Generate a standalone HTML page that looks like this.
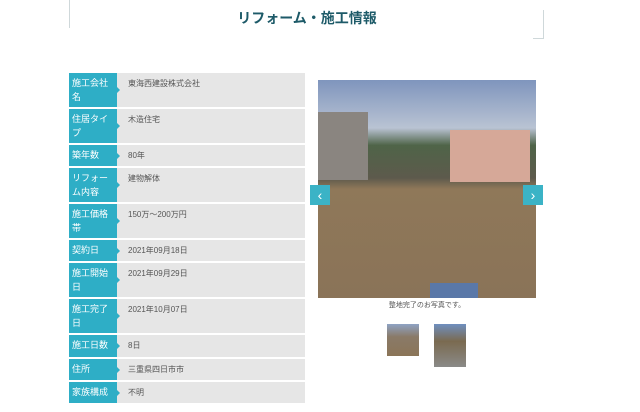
<!DOCTYPE html>
<html><head><meta charset="utf-8"><style>
body{margin:0;width:640px;height:412px;background:#fff;font-family:"Liberation Sans","Noto Sans CJK JP",sans-serif;position:relative;overflow:hidden}
.t{position:absolute;left:0;width:614px;top:8px;text-align:center;font-size:14px;font-weight:bold;color:#1d5a68}
.row{position:absolute;left:69px;width:236px;background:#e6e6e6;font-size:8px;color:#555}
.lab{position:absolute;left:0;top:0;bottom:0;width:48px;background:#2eaec6;color:#fff;font-size:9px;line-height:14px;padding:3px 3px;box-sizing:border-box}
.lab:after{content:"";position:absolute;right:-3px;top:50%;margin-top:-3px;border-left:3px solid #2eaec6;border-top:3px solid transparent;border-bottom:3px solid transparent}
.val{position:absolute;left:59px;top:5px}
.photo{position:absolute;left:318px;top:80px;width:218px;height:218px;background:linear-gradient(#7f95bd 0%,#b9c3d3 22%,#4f6448 30%,#5d5a4c 45%,#8f7859 50%,#8a7358 100%)}
.arr{position:absolute;top:185px;width:20px;height:20px;background:#3bb3c6;color:#fff;font-size:14px;text-align:center;line-height:20px}
</style></head><body>
<div style="position:absolute;left:69px;top:0;width:1px;height:28px;background:#cfd8da"></div>
<div style="position:absolute;left:543px;top:10px;width:1px;height:29px;background:#cfd8da"></div>
<div style="position:absolute;left:533px;top:38px;width:11px;height:1px;background:#cfd8da"></div>
<div class="t">リフォーム・施工情報</div>

<div class="row" style="top:73px;height:34px"><div class="lab">施工会社名</div><div class="val">東海西建設株式会社</div></div>
<div class="row" style="top:109px;height:34px"><div class="lab">住居タイプ</div><div class="val">木造住宅</div></div>
<div class="row" style="top:145px;height:21px"><div class="lab">築年数</div><div class="val">80年</div></div>
<div class="row" style="top:168px;height:34px"><div class="lab">リフォーム内容</div><div class="val">建物解体</div></div>
<div class="row" style="top:204px;height:34px"><div class="lab">施工価格帯</div><div class="val">150万～200万円</div></div>
<div class="row" style="top:240px;height:21px"><div class="lab">契約日</div><div class="val">2021年09月18日</div></div>
<div class="row" style="top:263px;height:34px"><div class="lab">施工開始日</div><div class="val">2021年09月29日</div></div>
<div class="row" style="top:299px;height:34px"><div class="lab">施工完了日</div><div class="val">2021年10月07日</div></div>
<div class="row" style="top:335px;height:22px"><div class="lab">施工日数</div><div class="val">8日</div></div>
<div class="row" style="top:359px;height:21px"><div class="lab">住所</div><div class="val">三重県四日市市</div></div>
<div class="row" style="top:382px;height:21px"><div class="lab">家族構成</div><div class="val">不明</div></div>

<div class="photo"></div>
<div style="position:absolute;left:318px;top:112px;width:50px;height:68px;background:#8a8580"></div>
<div style="position:absolute;left:450px;top:130px;width:80px;height:52px;background:#d6a898"></div>
<div style="position:absolute;left:430px;top:283px;width:48px;height:15px;background:#5a78a8"></div>
<div class="arr" style="left:310px">&#8249;</div>
<div class="arr" style="left:523px">&#8250;</div>
<div style="position:absolute;left:318px;width:218px;top:300px;text-align:center;font-size:7px;color:#555">整地完了のお写真です。</div>
<div style="position:absolute;left:387px;top:324px;width:32px;height:32px;background:linear-gradient(#8fa3c4 0%,#8a7a68 40%,#8b7558 100%)"></div>
<div style="position:absolute;left:434px;top:324px;width:32px;height:43px;background:linear-gradient(#6f8fbf 0%,#7a6a50 40%,#8a8a88 100%)"></div>
</body></html>
